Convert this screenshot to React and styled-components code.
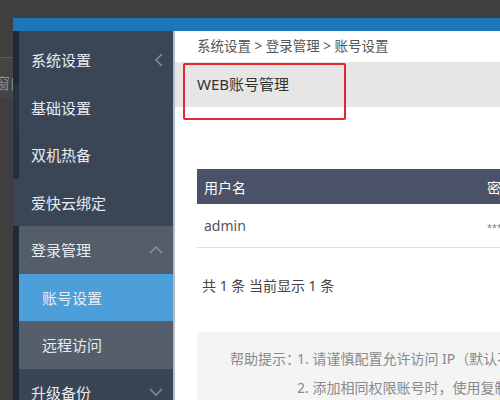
import styled, { createGlobalStyle } from "styled-components";

const GlobalStyle = createGlobalStyle`
    html, body {
        margin: 0;
        padding: 0;
        background: #3f3f3f;
    }
    * {
        box-sizing: border-box;
    }
`

const Screen = styled.div`
    width: 500px;
    height: 400px;
    overflow: hidden;
    background-color: #3f3f3f;
    padding-top: 18px;
    display: flex;
    font-family: "Noto Sans", "Noto Sans CJK SC", sans-serif;
`

const Backdrop = styled.div`
    width: 13px;
    flex-shrink: 0;
    display: flex;
    flex-direction: column;
    overflow: hidden;
`
const BackdropTop = styled.div`
    height: 40px;
    border-bottom: 1px solid #5a5a5a;
`
const BackdropTab = styled.div`
    height: 40px;
    padding-top: 16px;
    background-color: #444;
    color: #8c8c8c;
    font-size: 15px;
    line-height: 18px;
    white-space: nowrap;
    margin-left: -5px;
`

const Window = styled.div`
    flex: 1;
    display: flex;
    flex-direction: column;
    min-width: 0;
`
const TopBar = styled.div`
    height: 13px;
    background-color: #1d76b8;
    flex-shrink: 0;
`
const Main = styled.div`
    flex: 1;
    display: flex;
    min-height: 0;
`

const Sidebar = styled.div`
    width: 160px;
    flex-shrink: 0;
    padding-top: 5px;
    background: linear-gradient(to right, #1e2936 6px, #3a4656 6px);
`
const MenuRow = styled.div`
    height: 47.5px;
    display: flex;
    align-items: center;
    justify-content: space-between;
    border-left: 6px solid ${props => props.rail};
    background-color: ${props => props.bg};
    padding-left: ${props => props.sub ? "23px" : "12px"};
    padding-right: 10px;
    color: #e8ecf0;
    font-size: 15px;
`
const Divider = styled.div`
    width: 2px;
    flex-shrink: 0;
    background-color: #b8bdc3;
`

const Content = styled.div`
    flex: 1;
    position: relative;
    background-color: #fff;
    overflow: hidden;
    min-width: 0;
`
const Breadcrumb = styled.div`
    height: 31px;
    line-height: 31px;
    padding-left: 22px;
    font-size: 13.5px;
    color: #555;
    white-space: nowrap;
`
const TitleBand = styled.div`
    height: 45px;
    line-height: 45px;
    background-color: #e6e6e6;
    padding-left: 22px;
    font-size: 15px;
    color: #333;
`
const Highlight = styled.div`
    position: absolute;
    left: 8px;
    top: 32px;
    width: 163px;
    height: 57px;
    border: 2px solid #e5252b;
    border-radius: 2px;
`
const Body = styled.div`
    padding: 62px 0 0 22px;
`
const Table = styled.div`
    width: 420px;
`
const TRow = styled.div`
    display: grid;
    grid-template-columns: 283px 1fr;
    height: ${props => props.head ? "35px" : "44px"};
    align-items: center;
    background-color: ${props => props.head ? "#4b5166" : "#fff"};
    color: ${props => props.head ? "#fff" : "#555"};
    border-bottom: ${props => props.head ? "none" : "1px solid #dedede"};
    font-size: 14px;
`
const Cell = styled.div`
    padding-left: 7px;
    white-space: nowrap;
`
const Mask = styled.span`
    font-size: 9px;
    color: #777;
`
const Summary = styled.div`
    height: 76px;
    line-height: 76px;
    padding-left: 5px;
    font-size: 14px;
    color: #444;
    white-space: nowrap;
`
const Help = styled.div`
    margin-top: 8px;
    background-color: #f4f4f4;
    padding: 14px 0 20px 33px;
    height: 90px;
    display: grid;
    grid-template-columns: 67px auto;
    row-gap: 2px;
    font-size: 14px;
    line-height: 26px;
    color: #8a8a8a;
    white-space: nowrap;
`

const Chevron = ({ dir }) => {
    const paths = {
        left: "M7 1 L1 7 L7 13",
        up: "M1 7 L7 1 L13 7",
        down: "M1 1 L7 7 L13 1",
    }
    const size = dir === "left" ? { w: 8, h: 14 } : { w: 14, h: 8 }
    return (
        <svg width={size.w} height={size.h} viewBox={`0 0 ${size.w} ${size.h}`}>
            <path d={paths[dir]} fill="none" stroke="#8a949f" strokeWidth="1.4" />
        </svg>
    )
}

const menu = [
    { label: "系统设置", icon: "left", rail: "#1e2936", bg: "#3a4656" },
    { label: "基础设置", rail: "#243242", bg: "#3a4656" },
    { label: "双机热备", rail: "#223040", bg: "#3a4656" },
    { label: "爱快云绑定", rail: "#3a4656", bg: "#3a4656" },
    { label: "登录管理", icon: "up", rail: "#1f2b38", bg: "#545e6b" },
    { label: "账号设置", sub: true, rail: "#1f2b38", bg: "#4d9fda" },
    { label: "远程访问", sub: true, rail: "#1f2b38", bg: "#555f6c" },
    { label: "升级备份", icon: "down", rail: "#1f2b38", bg: "#394555" },
]

const App = () => {
    return (
        <>
            <GlobalStyle />
            <Screen>
                <Backdrop>
                    <BackdropTop />
                    <BackdropTab>窗口</BackdropTab>
                </Backdrop>
                <Window>
                    <TopBar />
                    <Main>
                        <Sidebar>
                            {menu.map(item => (
                                <MenuRow key={item.label} rail={item.rail} bg={item.bg} sub={item.sub}>
                                    <span>{item.label}</span>
                                    {item.icon && <Chevron dir={item.icon} />}
                                </MenuRow>
                            ))}
                        </Sidebar>
                        <Divider />
                        <Content>
                            <Breadcrumb>系统设置 &gt; 登录管理 &gt; 账号设置</Breadcrumb>
                            <TitleBand>WEB账号管理</TitleBand>
                            <Highlight />
                            <Body>
                                <Table>
                                    <TRow head>
                                        <Cell>用户名</Cell>
                                        <Cell>密码</Cell>
                                    </TRow>
                                    <TRow>
                                        <Cell>admin</Cell>
                                        <Cell><Mask>******</Mask></Cell>
                                    </TRow>
                                </Table>
                                <Summary>共 1 条 当前显示 1 条</Summary>
                                <Help>
                                    <span>帮助提示：</span>
                                    <span>1. 请谨慎配置允许访问 IP（默认不限制）</span>
                                    <span />
                                    <span>2. 添加相同权限账号时，使用复制可快速添加</span>
                                </Help>
                            </Body>
                        </Content>
                    </Main>
                </Window>
            </Screen>
        </>
    )
}

export default App;
